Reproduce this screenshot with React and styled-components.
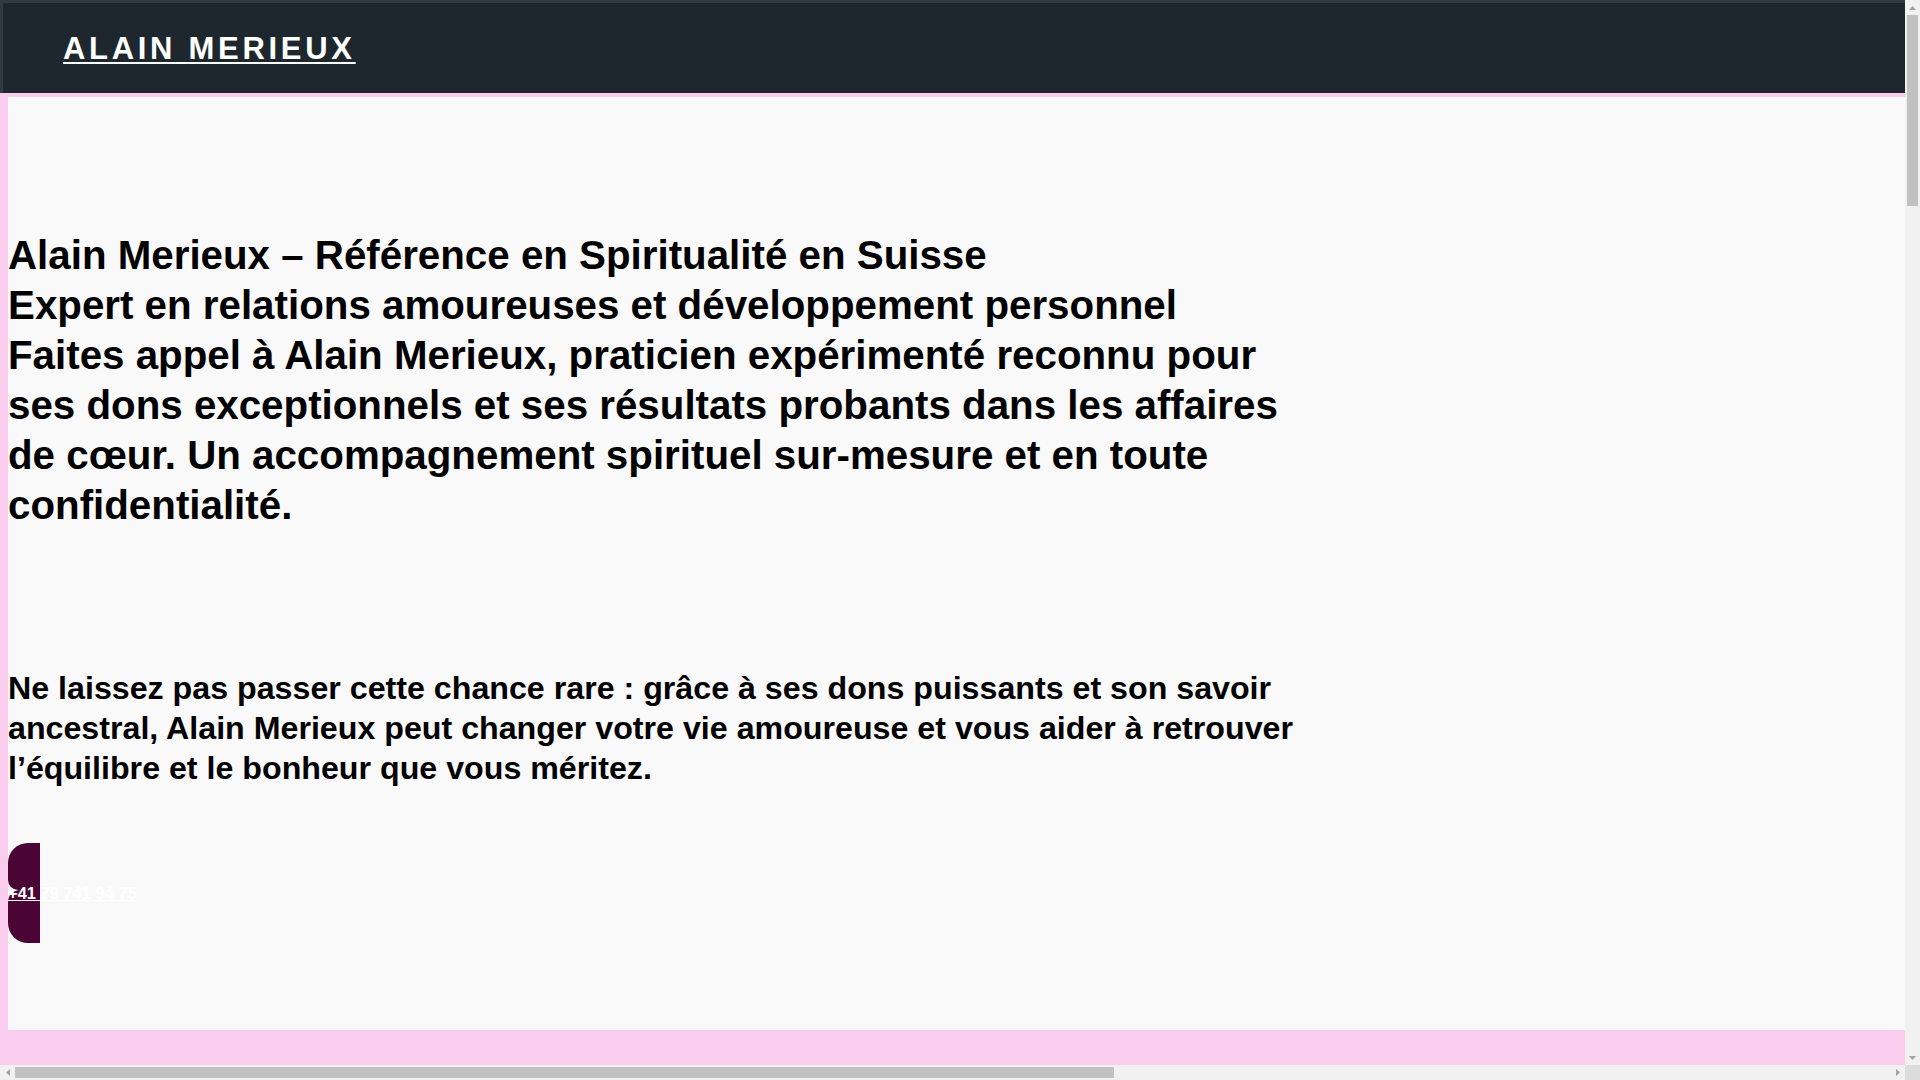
import React from 'react';
import styled, { createGlobalStyle } from 'styled-components';

const GlobalStyle = createGlobalStyle`
    html, body {
        margin: 0;
        padding: 0;
        overflow: hidden;
    }
    body {
        background: #facdee;
        font-family: "Liberation Sans", Arial, sans-serif;
        color: #000;
    }
`;

// window frame: page area plus classic scrollbars
const Viewport = styled.div`
    width: 100vw;
    height: 100vh;
    display: grid;
    grid-template-columns: 1fr 15px;
    grid-template-rows: 1fr 15px;
`;

const Scroller = styled.div`
    overflow: hidden;
    min-width: 0;
    min-height: 0;
`;

const ScrollTrack = styled.div`
    display: flex;
    flex-direction: ${(p) => (p.$vertical ? 'column' : 'row')};
    background: #f1f1f1;
`;

const ScrollArrow = styled.span`
    flex: 0 0 15px;
    width: 15px;
    height: 15px;
    display: flex;
    align-items: center;
    justify-content: center;
`;

const Thumb = styled.span`
    flex: 0 0 ${(p) => p.$size}px;
    margin: ${(p) => (p.$vertical ? '0 2px' : '2px 0')};
    background: #c1c1c1;
`;

const Spacer = styled.span`
    flex: 1;
`;

const Corner = styled.div`
    background: #dcdcdc;
`;

const Page = styled.div`
    width: 3241px;
    min-height: 5771px;
    background: #facdee;
`;

const Header = styled.header`
    box-sizing: border-box;
    height: 93px;
    background: #1e272e;
    border-top: 3px solid #2f3a41;
    border-left: 3px solid #2f3a41;
    display: flex;
    align-items: center;
    padding: 1px 0 0 60px;
    margin-bottom: 4px;

    a {
        color: #fff;
        font-size: 31px;
        font-weight: 700;
        letter-spacing: 3.7px;
        text-decoration: underline;
        text-decoration-thickness: 2px;
        text-underline-offset: 3px;
    }
`;

const Main = styled.main`
    margin-left: 8px;
    background: #f9f9f9;
    padding: 134px 0 87px;
`;

const Intro = styled.h1`
    margin: 0;
    max-width: 1300px;
    font-size: 40.3px;
    line-height: 50px;
    font-weight: 700;
`;

const Lead = styled.p`
    margin: 137px 0 0;
    max-width: 1300px;
    font-size: 32.2px;
    line-height: 40px;
    font-weight: 700;
`;

const CallButton = styled.a`
    margin-top: 55px;
    display: grid;
    grid-template-columns: 32px;
    grid-template-rows: 100px;
    width: 32px;
    color: #fff;
    text-decoration: underline;
`;

const Shape = styled.span`
    grid-area: 1 / 1;
    display: flex;
    flex-direction: column;
`;

const Half = styled.span`
    height: ${(p) => p.$h}px;
    background: #4a0436;
    border-radius: ${(p) => p.$radius};
`;

const Label = styled.span`
    grid-area: 1 / 1;
    align-self: center;
    white-space: nowrap;
    font-size: 16.5px;
    font-weight: 700;
    line-height: 20px;
`;

const Arrow = ({ dir }) => {
    const pts = {
        up: '0,4 3.5,0 7,4',
        down: '0,0 7,0 3.5,4',
        left: '4,0 4,7 0,3.5',
        right: '0,0 4,3.5 0,7',
    }[dir];
    const vertical = dir === 'up' || dir === 'down';
    return (
        <svg width={vertical ? 7 : 4} height={vertical ? 4 : 7} viewBox={vertical ? '0 0 7 4' : '0 0 4 7'}>
            <polygon points={pts} fill="#a3a3a3" />
        </svg>
    );
};

export default function App() {
    return (
        <>
            <GlobalStyle />
            <Viewport>
                <Scroller>
                    <Page>
                        <Header>
                            <a href="#">ALAIN MERIEUX</a>
                        </Header>
                        <Main>
                            <Intro>
                                Alain Merieux – Référence en Spiritualité en Suisse
                                <br />
                                Expert en relations amoureuses et développement personnel
                                <br />
                                Faites appel à Alain Merieux, praticien expérimenté reconnu pour ses dons
                                exceptionnels et ses résultats probants dans les affaires de cœur. Un
                                accompagnement spirituel sur-mesure et en toute confidentialité.
                            </Intro>
                            <Lead>
                                Ne laissez pas passer cette chance rare : grâce à ses dons puissants et son
                                savoir ancestral, Alain Merieux peut changer votre vie amoureuse et vous aider à
                                retrouver l’équilibre et le bonheur que vous méritez.
                            </Lead>
                            <CallButton href="#">
                                <Shape>
                                    <Half $h={47} $radius="20px 0 0 10px" />
                                    <Half $h={53} $radius="12px 0 0 20px" />
                                </Shape>
                                <Label>+41 79 741 94 75</Label>
                            </CallButton>
                        </Main>
                    </Page>
                </Scroller>
                <ScrollTrack $vertical>
                    <ScrollArrow><Arrow dir="up" /></ScrollArrow>
                    <Thumb $vertical $size={191} />
                    <Spacer />
                    <ScrollArrow><Arrow dir="down" /></ScrollArrow>
                </ScrollTrack>
                <ScrollTrack>
                    <ScrollArrow><Arrow dir="left" /></ScrollArrow>
                    <Thumb $size={1099} />
                    <Spacer />
                    <ScrollArrow><Arrow dir="right" /></ScrollArrow>
                </ScrollTrack>
                <Corner />
            </Viewport>
        </>
    );
}
